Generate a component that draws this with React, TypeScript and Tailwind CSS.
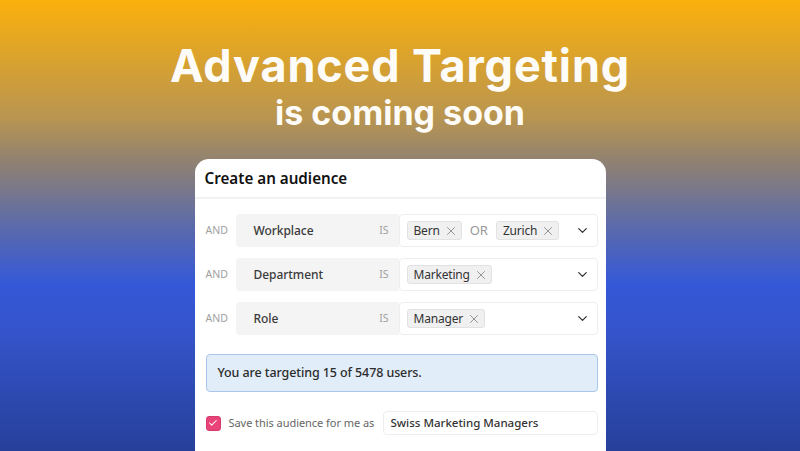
import { Check, ChevronDown, X } from "lucide-react";

const Tag = ({ label }: { label: string }) => (
  <span className="flex h-[19px] flex-none items-center gap-[4px] rounded-[3px] border border-[#e2e2e2] bg-[#f0f0f0] pl-[6px] pr-[3px] text-[12px] tracking-[-0.2px] text-[#333]">
    {label}
    <X size={14} strokeWidth={1.3} className="text-[#777]" />
  </span>
);

const Row = ({ field, children }: { field: string; children: React.ReactNode }) => (
  <div className="flex h-[33px] items-stretch">
    <span className="flex w-[30px] items-center pt-[1px] text-[10.5px] text-[#a0a0a0]">AND</span>
    <div className="flex w-[163px] items-center justify-between rounded-l-[4px] bg-[#f4f4f4] pl-[18px] pr-[10px] pt-[1px]">
      <span className="text-[12px] font-medium tracking-[-0.05px] text-[#3a3a3a]">{field}</span>
      <span className="text-[10.5px] text-[#a0a0a0]">IS</span>
    </div>
    <div className="flex w-[199px] items-center gap-[8px] rounded-[4px] border border-[#eeeeee] bg-white pl-[7px] pr-[7px]">
      {children}
      <ChevronDown size={15} strokeWidth={2} className="ml-auto flex-none text-[#333]" />
    </div>
  </div>
);

export default function App() {
  return (
    <div className="flex h-[451px] w-[800px] flex-col items-center overflow-hidden bg-[linear-gradient(180deg,#fbb00c_0%,#b99550_26%,#8f8172_36%,#5f6ca6_49%,#3558d8_63%,#3453c8_75%,#26409a_100%)] font-['Noto_Sans',sans-serif]">
      <h1 className="mt-[36px] flex-none font-['Inter',sans-serif] text-[45px] leading-[60px] font-bold tracking-[0.85px] text-[#fdfcf8]">
        Advanced Targeting
      </h1>
      <p className="mt-[-3px] flex-none font-['Inter',sans-serif] text-[34px] leading-[40px] font-bold text-[#fdfcf8]">
        is coming soon
      </p>
      <div className="mt-[26px] h-[300px] w-[411px] flex-none rounded-t-[14px] bg-white">
        <div className="flex h-[40px] items-center border-b-2 border-[#f2f2f2] pl-[10px] text-[15.2px] font-semibold text-[#111]">
          Create an audience
        </div>
        <div className="flex flex-col gap-[11px] pl-[11px] pt-[15px]">
          <Row field="Workplace">
            <Tag label="Bern" />
            <span className="text-[13px] text-[#999]">OR</span>
            <Tag label="Zurich" />
          </Row>
          <Row field="Department">
            <Tag label="Marketing" />
          </Row>
          <Row field="Role">
            <Tag label="Manager" />
          </Row>
        </div>
        <div className="mx-[11px] mt-[19px] flex h-[38px] w-[392px] items-center rounded-[4px] border border-[#a9c6ea] bg-[#e1edf8] pl-[11px] text-[12.5px] tracking-[-0.1px] font-medium text-[#2c2c2c]">
          You are targeting 15 of 5478 users.
        </div>
        <div className="ml-[11px] mt-[19px] flex h-[24px] w-[392px] items-center">
          <span className="flex h-[15px] w-[15px] flex-none items-center justify-center rounded-[3px] border border-[#d63a6c] bg-[#e8447a]">
            <Check size={10} strokeWidth={2.5} className="text-white" />
          </span>
          <span className="ml-[8px] w-[154px] flex-none whitespace-nowrap text-[11px] tracking-[-0.05px] text-[#666]">Save this audience for me as</span>
          <div className="flex h-[24px] flex-1 items-center rounded-[4px] border border-[#eeeeee] pl-[7px] text-[11.5px] font-medium text-[#333]">
            Swiss Marketing Managers
          </div>
        </div>
      </div>
    </div>
  );
}
